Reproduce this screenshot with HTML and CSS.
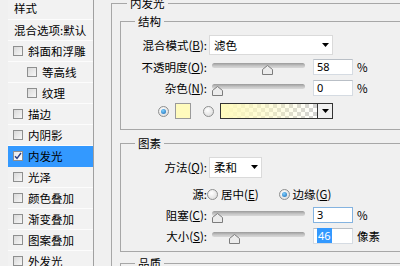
FILE: index.html
```html
<!DOCTYPE html>
<html lang="zh-CN">
<head>
<meta charset="utf-8">
<title>图层样式 - 内发光</title>
<link rel="stylesheet" href="styles.css">
</head>
<body>
<div class="app">
  <aside class="sidebar">
    <div class="list">
      <div class="item head">样式</div>
      <div class="item plain">混合选项:默认</div>
      <div class="item"><span class="cb"></span>斜面和浮雕</div>
      <div class="item sub"><span class="cb"></span>等高线</div>
      <div class="item sub"><span class="cb"></span>纹理</div>
      <div class="item"><span class="cb"></span>描边</div>
      <div class="item"><span class="cb"></span>内阴影</div>
      <div class="item sel"><span class="cb on"><svg viewBox="0 0 8 8" width="8" height="8"><path d="M1 4.2 L3 6.3 L7 1" fill="none" stroke="#2b3f86" stroke-width="1.4"/></svg></span>内发光</div>
      <div class="item"><span class="cb"></span>光泽</div>
      <div class="item"><span class="cb"></span>颜色叠加</div>
      <div class="item"><span class="cb"></span>渐变叠加</div>
      <div class="item"><span class="cb"></span>图案叠加</div>
      <div class="item"><span class="cb"></span>外发光</div>
    </div>
  </aside>

  <main class="main">
    <section class="box outer">
      <h2 class="box-title">内发光</h2>

      <section class="box inner s1">
        <h3 class="box-title">结构</h3>
        <div class="box-body b1">
          <div class="row r-sel">
            <span class="lbl">混合模式(<u>B</u>):</span>
            <div class="select wide"><span>滤色</span><svg class="arr" viewBox="0 0 7 4" width="7" height="4"><path d="M0 0H7L3.5 4Z"/></svg></div>
          </div>
          <div class="row r-op">
            <span class="lbl">不透明度(<u>O</u>):</span>
            <div class="slider"><div class="track"></div><svg class="thumb" style="left:50px" viewBox="0 0 11 10" width="11" height="10"><path d="M5.5 0.5 L10.5 4.5 V9.5 H0.5 V4.5 Z"/></svg></div>
            <div class="num">58</div><span class="unit">%</span>
          </div>
          <div class="row r-noise">
            <span class="lbl">杂色(<u>N</u>):</span>
            <div class="slider"><div class="track"></div><svg class="thumb" style="left:0px" viewBox="0 0 11 10" width="11" height="10"><path d="M5.5 0.5 L10.5 4.5 V9.5 H0.5 V4.5 Z"/></svg></div>
            <div class="num">0</div><span class="unit">%</span>
          </div>
          <div class="row r-color">
            <span class="radio on"></span>
            <span class="swatch"></span>
            <span class="radio r2"></span>
            <div class="grad">
              <div class="grad-fill"></div>
              <div class="grad-btn"><svg viewBox="0 0 7 4" width="7" height="4"><path d="M0 0H7L3.5 4Z"/></svg></div>
            </div>
          </div>
        </div>
      </section>

      <section class="box inner s2">
        <h3 class="box-title">图素</h3>
        <div class="box-body b2">
          <div class="row r-sel2">
            <span class="lbl">方法(<u>Q</u>):</span>
            <div class="select narrow"><span>柔和</span><svg class="arr" viewBox="0 0 7 4" width="7" height="4"><path d="M0 0H7L3.5 4Z"/></svg></div>
          </div>
          <div class="row r-src">
            <span class="lbl">源:</span>
            <span class="radio"></span><span class="rtxt">居中(<u>E</u>)</span>
            <span class="radio on r3"></span><span class="rtxt">边缘(<u>G</u>)</span>
          </div>
          <div class="row r-choke">
            <span class="lbl">阻塞(<u>C</u>):</span>
            <div class="slider"><div class="track"></div><svg class="thumb" style="left:0px" viewBox="0 0 11 10" width="11" height="10"><path d="M5.5 0.5 L10.5 4.5 V9.5 H0.5 V4.5 Z"/></svg></div>
            <div class="num focus">3</div><span class="unit">%</span>
          </div>
          <div class="row r-size">
            <span class="lbl">大小(<u>S</u>):</span>
            <div class="slider"><div class="track"></div><svg class="thumb" style="left:17px" viewBox="0 0 11 10" width="11" height="10"><path d="M5.5 0.5 L10.5 4.5 V9.5 H0.5 V4.5 Z"/></svg></div>
            <div class="num"><span class="hl">46</span></div><span class="unit">像素</span>
          </div>
        </div>
      </section>

      <section class="box inner s3">
        <h3 class="box-title">品质</h3>
      </section>
    </section>
  </main>
</div>
</body>
</html>
```

FILE: styles.css
```css
* { box-sizing: border-box; }
html, body { margin: 0; padding: 0; }
body {
  background: #f0f0f0;
  font-family: "Noto Sans CJK SC", "Noto Sans", sans-serif;
  font-size: 11.5px;
  line-height: 14px;
  color: #000;
  overflow: hidden;
  width: 400px;
  height: 266px;
}
u { text-decoration: underline; text-underline-offset: 1px; }

.app { display: flex; width: 400px; height: 266px; overflow: hidden; }

/* ---------- sidebar ---------- */
.sidebar { flex: none; width: 94px; padding-left: 8px; }
.list { border-right: 1px solid #a0a0a0; height: 100%; background: #f2f2f2; }
.item {
  height: 21px;
  display: flex;
  align-items: center;
  gap: 5px;
  padding-left: 5px;
  border-bottom: 1px solid #fcfcfc;
  white-space: nowrap;
}
.item.head { height: 20px; padding-left: 6px; align-items: flex-start; padding-top: 1px; }
.item.plain { padding-left: 6px; }
.item.sub { padding-left: 19px; }
.item.sel { background: #3399ff; border-bottom-color: #3399ff; }
.cb {
  flex: none;
  width: 10px;
  height: 10px;
  border: 1px solid #8e8f8f;
  background: linear-gradient(135deg, #d9d9d9, #f7f7f7);
  display: flex;
  align-items: center;
  justify-content: center;
}
.cb.on { background: linear-gradient(135deg, #e8e8e8, #ffffff); }

/* ---------- group boxes ---------- */
.main { flex: none; width: 306px; margin-left: 17px; }
.box {
  border-top: 1px solid #a7a7a7;
  border-left: 1px solid #a7a7a7;
}
.box-title {
  margin: -8px 0 0 14px;
  width: fit-content;
  height: 14px;
  padding: 0 3px;
  background: #f0f0f0;
  font-size: 11.5px;
  font-weight: normal;
  line-height: 14px;
  white-space: nowrap;
}
.outer { margin-top: 3px; height: 300px; }
.outer > .box-title { margin-left: 15px; }
.inner { margin-left: 8px; border-bottom: 1px solid #a7a7a7; }
.s1 { margin-top: 11px; }
.s2 { margin-top: 13px; }
.s3 { margin-top: 11px; border-bottom: none; height: 30px; }
.b1 { padding: 7px 0 10px; }
.b2 { padding: 7px 0 7px; }

.row { display: flex; align-items: center; height: 16px; }
.lbl { flex: none; width: 86px; text-align: right; white-space: nowrap; }

.r-sel { height: 20px; }
.r-op { margin-top: 4px; }
.r-noise { margin-top: 5px; }
.r-color { margin-top: 7px; padding-left: 37px; }
.r-sel2 { height: 20px; }
.r-src { margin-top: 9px; }
.r-choke { margin-top: 5px; }
.r-size { margin-top: 5px; }

.select {
  margin-left: 2px;
  height: 20px;
  background: #fff;
  border: 1px solid #dadada;
  display: flex;
  align-items: center;
  justify-content: space-between;
  padding: 0 3px 0 4px;
}
.select.wide { width: 124px; }
.select.narrow { width: 53px; height: 21px; }
.arr { fill: #000; }

.slider { position: relative; flex: none; width: 93px; height: 16px; margin-left: 5px; }
.track {
  margin-top: 4px;
  height: 5px;
  border-radius: 3px;
  background: linear-gradient(#9a9a9a, #c8c8c8 60%, #d8d8d8);
}
.thumb { position: absolute; top: 6px; }
.thumb path { fill: #ececec; stroke: #7c7c7c; stroke-width: 1; }

.num {
  flex: none;
  margin-left: 8px;
  width: 40px;
  height: 16px;
  background: #fff;
  border: 1px solid #d5dbe2;
  border-top-color: #b9bfc6;
  padding-left: 3px;
  line-height: 14px;
  font-family: "Noto Sans", "Noto Sans CJK SC", sans-serif;
  font-size: 11px;
}
.num.focus { border-color: #84b3e0; }
.hl { background: #3399ff; color: #fff; padding: 0 1px; }
.unit { margin-left: 4px; white-space: nowrap; }

.radio {
  flex: none;
  width: 11px;
  height: 11px;
  border-radius: 50%;
  border: 1px solid #8e8f8f;
  background: radial-gradient(circle at 40% 35%, #ffffff, #d6d6d6);
  display: flex;
  align-items: center;
  justify-content: center;
}
.radio.on::after {
  content: "";
  width: 5px;
  height: 5px;
  border-radius: 50%;
  background: radial-gradient(circle at 40% 35%, #7fd0ff, #1565b0);
}
.swatch {
  flex: none;
  margin-left: 6px;
  width: 16px;
  height: 16px;
  background: #fffbbd;
  border: 1px solid #9a9a9a;
}
.radio.r2 { margin-left: 12px; }
.grad {
  flex: none;
  margin-left: 6px;
  width: 113px;
  height: 16px;
  border: 1px solid #333;
  display: flex;
}
.grad-fill {
  flex: 1;
  background:
    linear-gradient(to right, #fffbbd, rgba(255, 251, 189, 0.6) 45%, rgba(255, 251, 189, 0)),
    repeating-conic-gradient(#d2d2d2 0 25%, #ffffff 0 50%) 0 0 / 8px 8px;
}
.grad-btn {
  flex: none;
  width: 15px;
  border-left: 1px solid #333;
  background: #f0f0f0;
  display: flex;
  align-items: center;
  justify-content: center;
}
.grad-btn svg { fill: #000; }

.rtxt { margin-left: 3px; white-space: nowrap; }
.radio.r3 { margin-left: 20px; }
```
